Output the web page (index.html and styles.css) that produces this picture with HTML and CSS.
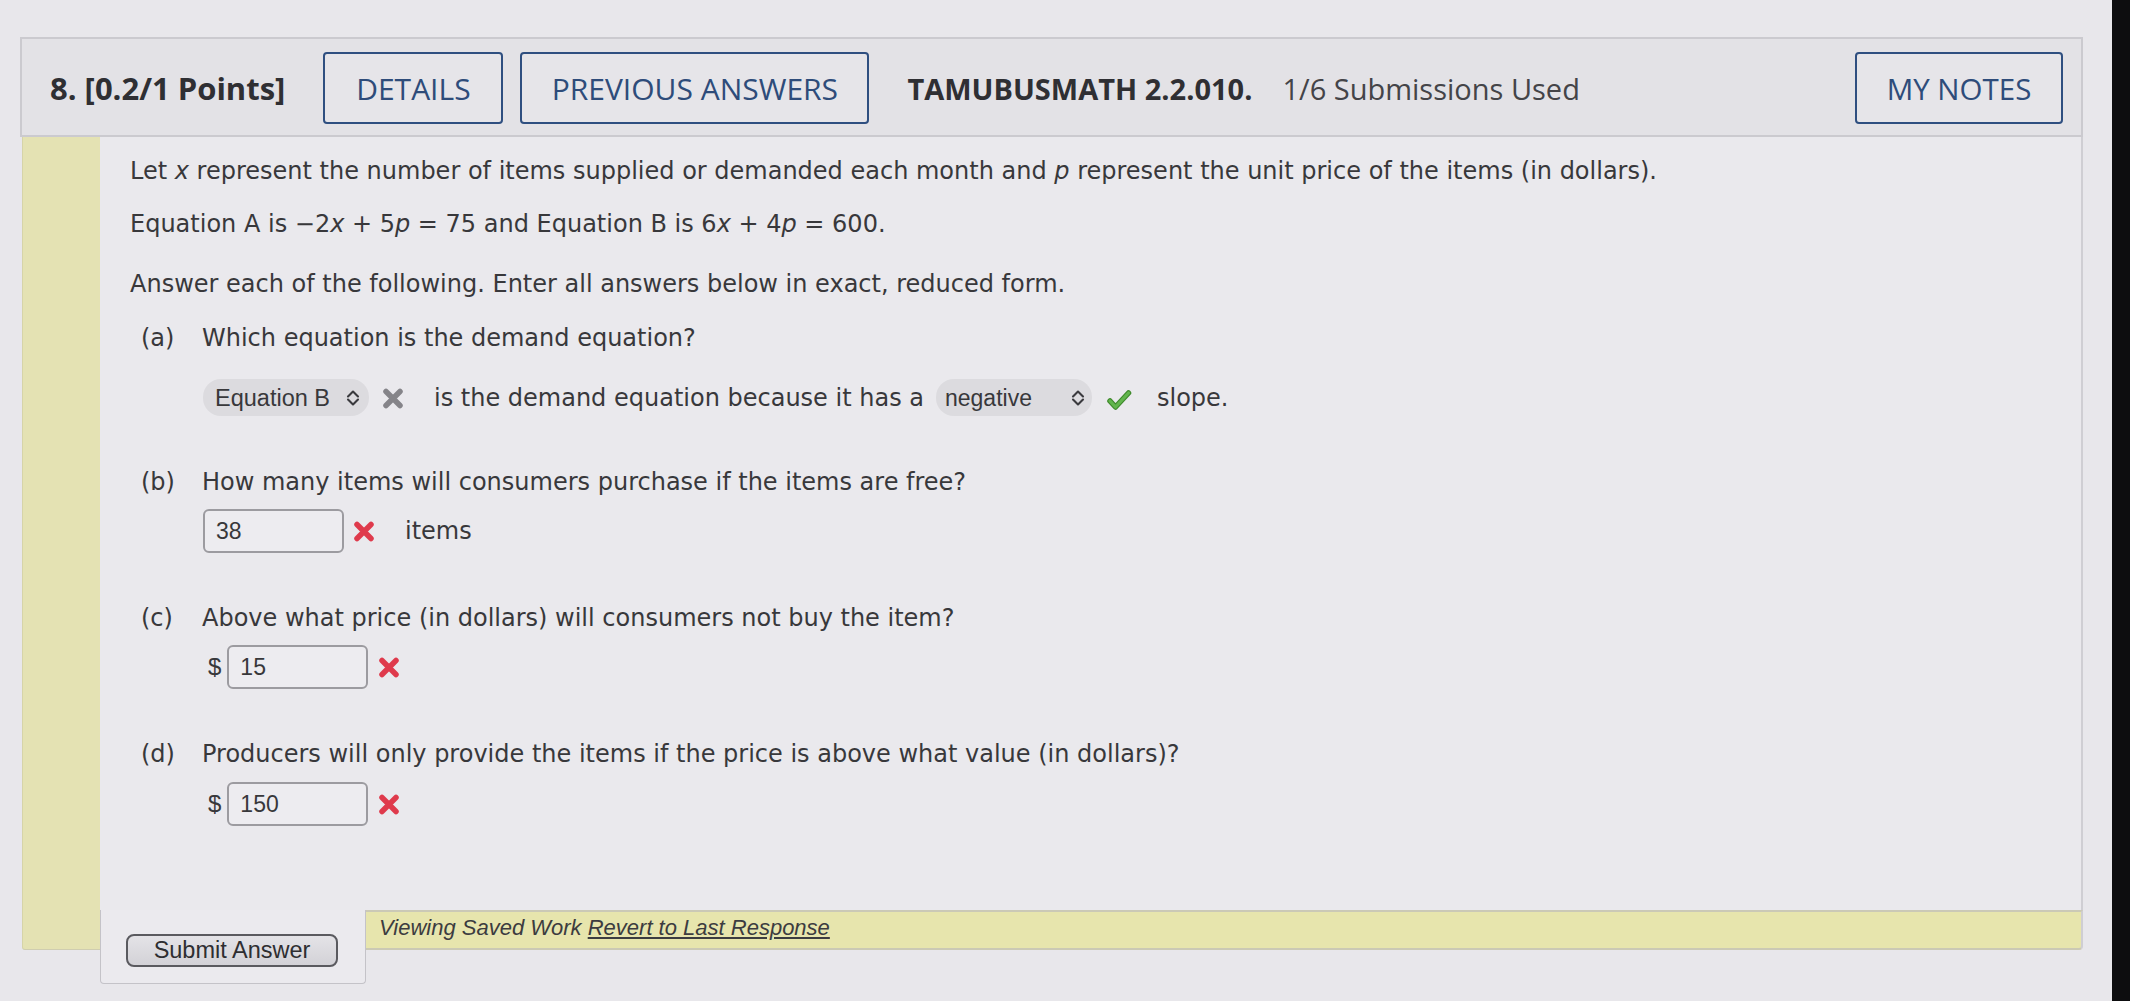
FILE: index.html
```html
<!DOCTYPE html>
<html lang="en">
<head>
<meta charset="utf-8">
<title>Question 8</title>
<link rel="stylesheet" href="styles.css">
</head>
<body>
<div class="screen">
  <div class="page">
    <div class="question">
      <header class="qhead">
        <span class="points">8. [0.2/1 Points]</span>
        <button class="hbtn details">DETAILS</button>
        <button class="hbtn prev">PREVIOUS ANSWERS</button>
        <span class="qid">TAMUBUSMATH 2.2.010.</span>
        <span class="subs">1/6 Submissions Used</span>
        <button class="hbtn notes">MY NOTES</button>
      </header>
      <div class="qbody">
        <div class="stripe"></div>
        <div class="content">
          <p class="l1">Let <i>x</i> represent the number of items supplied or demanded each month and <i>p</i> represent the unit price of the items (in dollars).</p>
          <p class="l2">Equation A is −2<i>x</i> + 5<i>p</i> = 75 and Equation B is 6<i>x</i> + 4<i>p</i> = 600.</p>
          <p class="l3">Answer each of the following. Enter all answers below in exact, reduced form.</p>

          <div class="part pa">
            <div class="qline"><span class="lbl">(a)</span><span>Which equation is the demand equation?</span></div>
            <div class="arow">
              <span class="pill eqsel">Equation B<svg class="chev" viewBox="0 0 16 20"><polyline points="3,8.5 8,3.5 13,8.5"/><polyline points="3,11.5 8,16.5 13,11.5"/></svg></span>
              <svg class="mark xgray" viewBox="0 0 24 23"><path d="M5 4.5 L19 18.5 M19 4.5 L5 18.5"/></svg>
              <span class="t-is">is the demand equation because it has a</span>
              <span class="pill negsel">negative<svg class="chev" viewBox="0 0 16 20"><polyline points="3,8.5 8,3.5 13,8.5"/><polyline points="3,11.5 8,16.5 13,11.5"/></svg></span>
              <svg class="mark check" viewBox="0 0 28 24"><path class="ck-o" d="M5 14 L10.5 20 L23.5 6"/><path class="ck-i" d="M5 14 L10.5 20 L23.5 6"/></svg>
              <span class="t-slope">slope.</span>
            </div>
          </div>

          <div class="part pb">
            <div class="qline"><span class="lbl">(b)</span><span>How many items will consumers purchase if the items are free?</span></div>
            <div class="arow">
              <span class="inp i38">38</span>
              <svg class="mark xred" viewBox="0 0 24 23"><path d="M5 4.5 L19 18.5 M19 4.5 L5 18.5"/></svg>
              <span class="t-items">items</span>
            </div>
          </div>

          <div class="part pc">
            <div class="qline"><span class="lbl">(c)</span><span>Above what price (in dollars) will consumers not buy the item?</span></div>
            <div class="arow">
              <span class="dollar">$</span>
              <span class="inp">15</span>
              <svg class="mark xred" viewBox="0 0 24 23"><path d="M5 4.5 L19 18.5 M19 4.5 L5 18.5"/></svg>
            </div>
          </div>

          <div class="part pd">
            <div class="qline"><span class="lbl">(d)</span><span>Producers will only provide the items if the price is above what value (in dollars)?</span></div>
            <div class="arow">
              <span class="dollar">$</span>
              <span class="inp">150</span>
              <svg class="mark xred" viewBox="0 0 24 23"><path d="M5 4.5 L19 18.5 M19 4.5 L5 18.5"/></svg>
            </div>
          </div>
        </div>
        <div class="submitbox"><button class="submit">Submit Answer</button></div>
        <div class="savedbar"><i>Viewing Saved Work <a href="#">Revert to Last Response</a></i></div>
      </div>
    </div>
  </div>
  <div class="bezel"></div>
</div>
</body>
</html>
```

FILE: styles.css
```css
* { box-sizing: border-box; }
html, body { margin: 0; padding: 0; }
body {
  width: 2130px;
  height: 1001px;
  overflow: hidden;
  background: #e8e7eb;
  color: #38383b;
}
.screen { display: flex; height: 1001px; }
.page {
  flex: 1;
  padding: 37px 0 0 20px;
  background: #e8e7eb;
}
.bezel { width: 18px; background: #0d0d0f; }

.question { width: 2063px; }

.qhead {
  height: 100px;
  display: flex;
  align-items: center;
  padding: 2px 18px 0 28px;
  background: #e3e2e6;
  border: 2px solid #cbcacf;
  font-family: "Open Sans", "Liberation Sans", sans-serif;
  font-size: 29px;
  color: #2f2f33;
}
.points { font-weight: 700; font-size: 31px; margin-right: 38px; }
.hbtn {
  font-family: "Open Sans", "Liberation Sans", sans-serif;
  font-size: 30px;
  color: #2e4c7a;
  background: #e6e5e9;
  border: 2.5px solid #2f4f80;
  border-radius: 4px;
  height: 72px;
  padding: 0 10px;
  cursor: pointer;
}
.details { width: 180px; margin-right: 17px; }
.prev { width: 349px; margin-right: 38px; }
.qid { font-weight: 700; margin-right: 30px; }
.subs { color: #444448; }
.notes { margin-left: auto; width: 208px; font-size: 29.5px; }

.qbody {
  display: grid;
  grid-template-columns: 80px 266px 1fr;
  grid-template-rows: 773px 40px 34px;
}
.stripe {
  grid-column: 1;
  grid-row: 1 / 3;
  margin-left: 2px;
  background: #e4e2b3;
  border-left: 1px solid #d6d4a8;
  border-bottom: 1px solid #cfcdb0;
  border-radius: 0 0 0 3px;
}
.content {
  grid-column: 2 / 4;
  grid-row: 1;
  background: #eae9ed;
  border-right: 2px solid #cfced3;
  padding: 19px 0 0 30px;
  font-family: "DejaVu Sans", Verdana, sans-serif;
  font-size: 24px;
  line-height: 30px;
  color: #38383b;
}
.content p { margin: 0; }
.l1 { margin-bottom: 23px !important; }
.l2 { margin-bottom: 30px !important; }
.l3 { margin-bottom: 24px !important; }

.qline { display: flex; padding-left: 11px; }
.lbl { width: 61px; }
.arow {
  display: flex;
  align-items: center;
  padding-left: 73px;
}

.pa .arow { margin-top: 26px; height: 37px; }
.pb { margin-top: 51px; }
.pb .arow { margin-top: 12px; height: 44px; }
.pc { margin-top: 50px; }
.pc .arow { margin-top: 12px; height: 44px; }
.pd { margin-top: 50px; }
.pd .arow { margin-top: 13px; height: 44px; }

.pill {
  display: inline-flex;
  align-items: center;
  justify-content: space-between;
  height: 37px;
  background: #dcdbdf;
  border-radius: 18px;
  font-family: "Liberation Sans", Arial, sans-serif;
  font-size: 23.5px;
  color: #38383b;
}
.eqsel { width: 166px; padding: 0 8px 0 12px; }
.negsel { width: 156px; padding: 0 6px 0 9px; margin-left: 12px; font-size: 23px; }
.chev {
  width: 16px;
  height: 20px;
  fill: none;
  stroke: #3a3a3e;
  stroke-width: 2.1;
  stroke-linecap: round;
  stroke-linejoin: round;
}
.mark { fill: none; stroke-linejoin: round; }
.xgray { width: 24px; height: 23px; stroke: #858489; stroke-width: 5.5; stroke-linecap: round; margin: 2px 29px 0 12px; }
.check { width: 28px; height: 24px; margin: 2px 24px 0 13px; stroke-linecap: round; }
.ck-o { stroke: #3f8a2c; stroke-width: 5.5; }
.ck-i { stroke: #62b54d; stroke-width: 3.2; }
.xred { width: 24px; height: 23px; stroke: #df3a4c; stroke-width: 5.5; stroke-linecap: round; margin: 0 0 0 8px; }

.inp {
  display: inline-flex;
  align-items: center;
  width: 141px;
  height: 44px;
  padding-left: 11px;
  background: #edecf0;
  border: 2px solid #9c9ba0;
  border-radius: 6px;
  font-family: "Liberation Sans", Arial, sans-serif;
  font-size: 23px;
  color: #38383b;
}
.t-items { margin-left: 29px; }
.dollar { margin-left: 5px; margin-right: 6px; font-family: "Liberation Sans", Arial, sans-serif; font-size: 24px; }
.pc .xred, .pd .xred { margin-left: 9px; }

.submitbox {
  grid-column: 2;
  grid-row: 2 / 4;
  background: #ebeaee;
  border: 1px solid #c4c3c8;
  border-top: none;
  border-radius: 0 0 4px 4px;
  padding: 24px 0 0 25px;
}
.submit {
  width: 212px;
  height: 33px;
  font-family: "Liberation Sans", Arial, sans-serif;
  font-size: 23.5px;
  color: #2e2e31;
  background: linear-gradient(#e4e3e7, #d3d2d7);
  border: 2px solid #5a5a5f;
  border-radius: 8px;
  padding: 0;
}
.savedbar {
  grid-column: 3;
  grid-row: 2;
  background: #e7e5ad;
  border-top: 2px solid #cbc9b6;
  border-bottom: 2px solid #cbc9b4;
  border-right: 2px solid #cfced3;
  border-radius: 0 0 4px 0;
  padding: 3px 0 0 13px;
  font-family: "Liberation Sans", Arial, sans-serif;
  font-size: 22px;
  color: #3c3c40;
}
.savedbar a { color: #3c3c40; text-decoration: underline; }
```
